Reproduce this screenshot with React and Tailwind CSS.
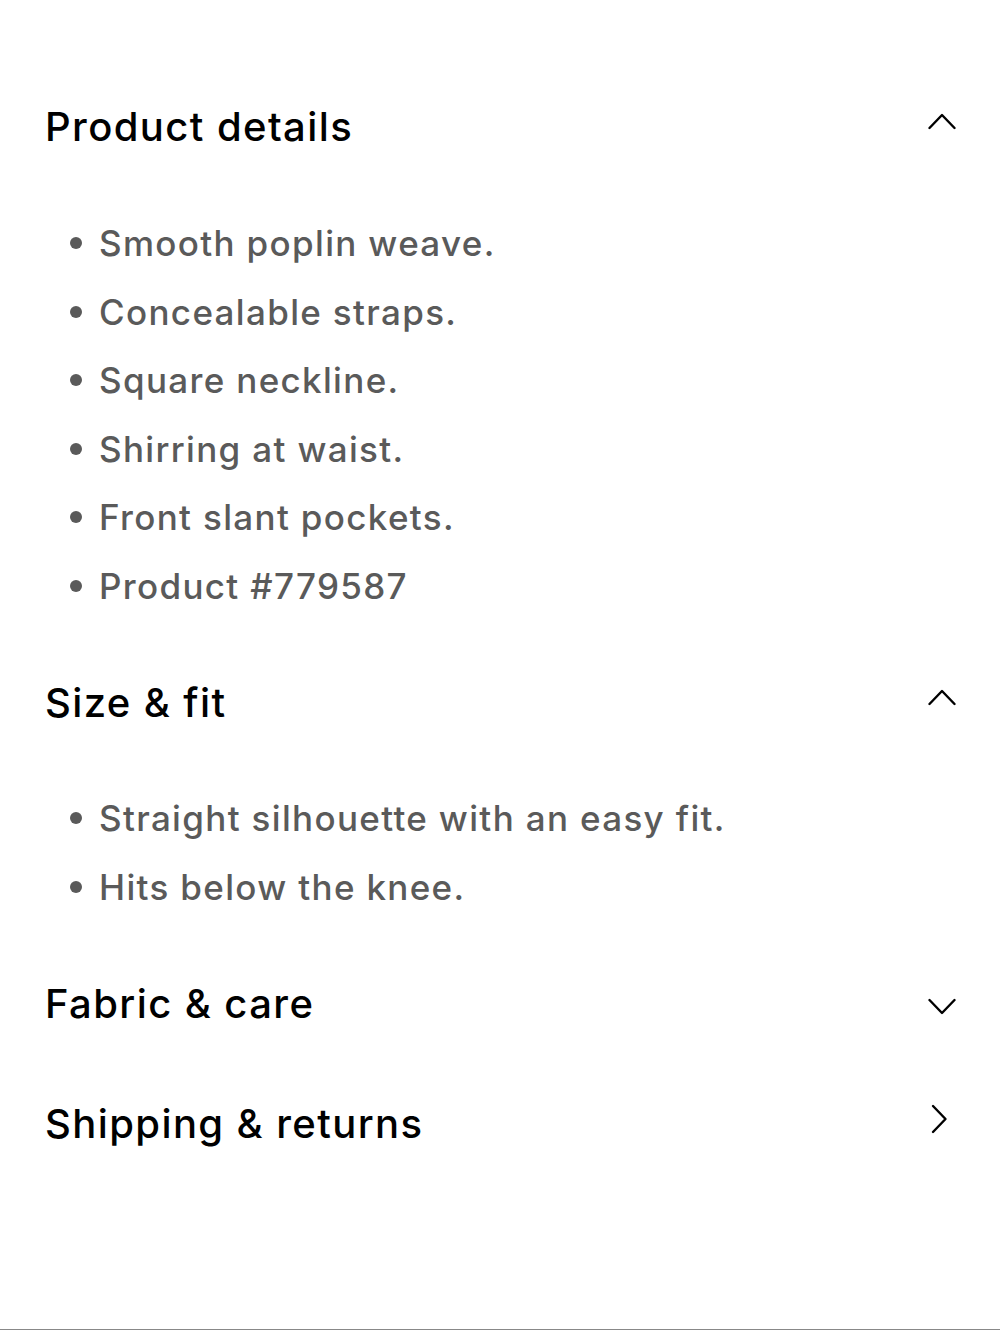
import React from "react";

const font = { fontFamily: "Inter, 'Liberation Sans', sans-serif" };

function Chevron({ dir }) {
  if (dir === "right") {
    return (
      <svg width="18" height="30" viewBox="0 0 18 30" fill="none" className="mr-[8px] -translate-y-[5px] block">
        <path d="M3 2 L15.5 15 L3 28" stroke="#000" strokeWidth="2.4" strokeLinecap="round" strokeLinejoin="round" />
      </svg>
    );
  }
  if (dir === "down") {
    return (
      <svg width="28" height="18" viewBox="0 0 28 18" fill="none" className="block translate-y-[3px]">
        <path d="M1.5 2 L14 15 L26.5 2" stroke="#000" strokeWidth="2.4" strokeLinecap="round" strokeLinejoin="round" />
      </svg>
    );
  }
  return (
    <svg width="28" height="18" viewBox="0 0 28 18" fill="none" className="block -translate-y-[6px]">
      <path d="M1.5 16 L14 3 L26.5 16" stroke="#000" strokeWidth="2.4" strokeLinecap="round" strokeLinejoin="round" />
    </svg>
  );
}

function Header({ title, dir }) {
  return (
    <div className="flex h-20 items-center justify-between pr-[44px]">
      <h2 className="text-[40px] font-[450] leading-none tracking-[0.035em] text-black">{title}</h2>
      <Chevron dir={dir} />
    </div>
  );
}

function Bullets({ items }) {
  return (
    <ul className="pl-[25px]">
      {items.map((t) => (
        <li key={t} className="flex h-[68.5px] items-center text-[35px] font-[450] tracking-[0.038em] text-[#5a5a5a]">
          <span className="mr-[17px] h-[12px] w-[12px] rounded-full bg-[#5a5a5a]" />
          <span>{t}</span>
        </li>
      ))}
    </ul>
  );
}

export default function App() {
  return (
    <div className="min-h-[1330px] border-b border-[#888888] bg-white pl-[45px] pt-[87px]" style={font}>
      <Header title="Product details" dir="up" />
      <div className="pb-[43px] pt-[42px]">
        <Bullets
          items={[
            "Smooth poplin weave.",
            "Concealable straps.",
            "Square neckline.",
            "Shirring at waist.",
            "Front slant pockets.",
            "Product #779587",
          ]}
        />
      </div>
      <Header title="Size & fit" dir="up" />
      <div className="pb-[43px] pt-[41px]">
        <Bullets items={["Straight silhouette with an easy fit.", "Hits below the knee."]} />
      </div>
      <Header title="Fabric & care" dir="down" />
      <div className="h-10" />
      <Header title="Shipping & returns" dir="right" />
    </div>
  );
}
